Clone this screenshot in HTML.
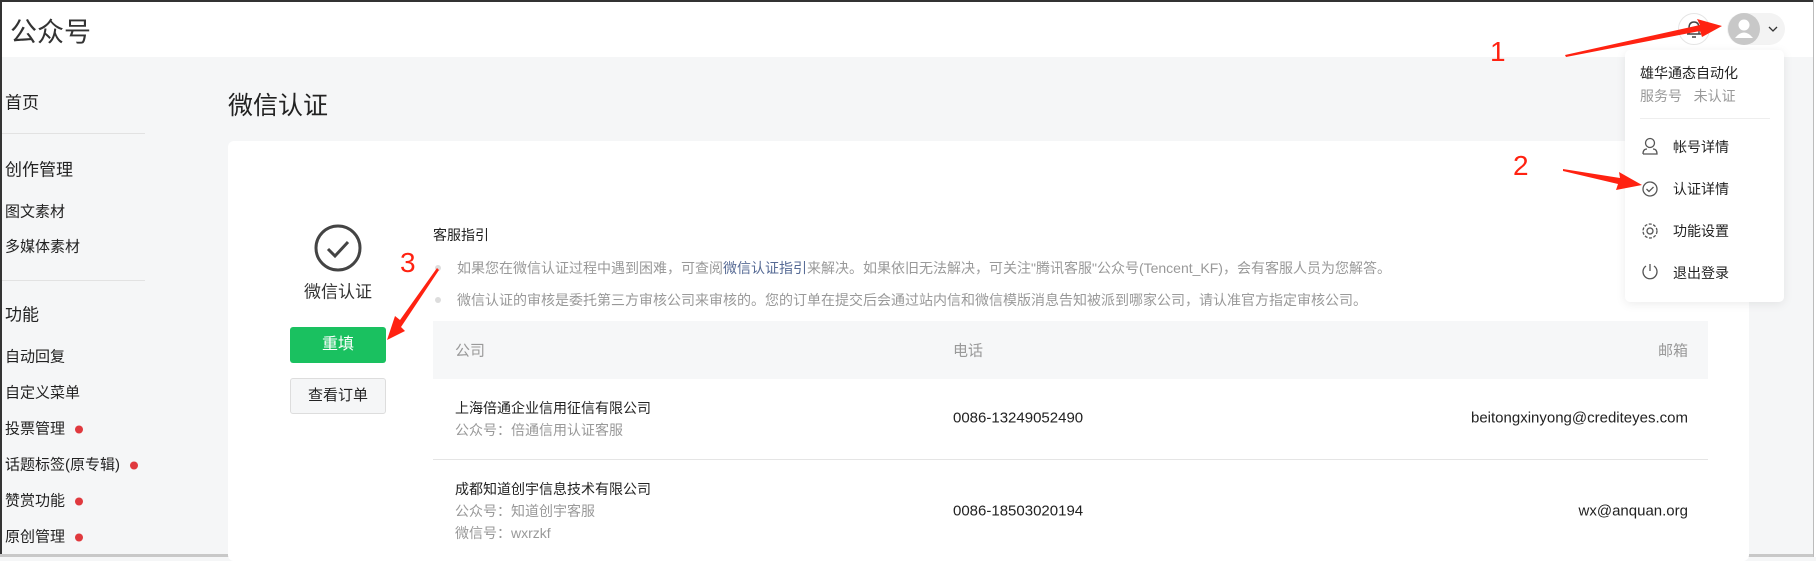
<!DOCTYPE html>
<html><head><meta charset="utf-8"><style>
*{margin:0;padding:0;box-sizing:border-box}
body{width:1816px;height:557px;overflow:hidden;background:#f5f6f7;font-family:"Liberation Sans","Noto Sans CJK SC",sans-serif;position:relative;color:#333}
.a{position:absolute;white-space:nowrap}
.top{position:absolute;left:0;top:0;width:1816px;height:57px;background:#fff;border-top:2px solid #333;border-left:2px solid #333}
.side{font-size:15px;color:#222;left:5px;transform:translateY(-50%)}
.h{font-size:17px}
.dv{position:absolute;left:2px;width:143px;height:1px;background:#e2e2e2}
.dot{display:inline-block;width:8px;height:8px;border-radius:50%;background:#e0393e;margin-left:10px;vertical-align:middle}
.card{position:absolute;left:228px;top:141px;width:1521px;height:420px;background:#fff;border-radius:6px}
.g{color:#999;font-size:14px}
.c{transform:translateY(-50%)}
.menu{position:absolute;left:1625px;top:50px;width:159px;height:252px;background:#fff;border-radius:5px;box-shadow:0 2px 10px rgba(0,0,0,.08)}
</style></head><body>
<div class="top"></div>
<div class="a c" style="left:10px;top:30px;font-size:27px;color:#333">公众号</div>
<div style="position:absolute;left:0;top:0;width:2px;height:557px;background:#333"></div>
<div style="position:absolute;left:0;bottom:0;width:1816px;height:3px;background:#c8c8c8"></div>
<div style="position:absolute;left:1813px;top:0;width:3px;height:557px;background:#fff;border-left:1px solid #bbb"></div>

<div class="a side h" style="top:101px">首页</div>
<div class="dv" style="top:133px"></div>
<div class="a side h" style="top:168px">创作管理</div>
<div class="a side" style="top:211px">图文素材</div>
<div class="a side" style="top:246px">多媒体素材</div>
<div class="dv" style="top:280px"></div>
<div class="a side h" style="top:313px">功能</div>
<div class="a side" style="top:356px">自动回复</div>
<div class="a side" style="top:392px">自定义菜单</div>
<div class="a side" style="top:428px">投票管理<span class="dot"></span></div>
<div class="a side" style="top:464px">话题标签(原专辑)<span class="dot"></span></div>
<div class="a side" style="top:500px">赞赏功能<span class="dot"></span></div>
<div class="a side" style="top:536px">原创管理<span class="dot"></span></div>

<div class="a c" style="left:228px;top:104px;font-size:25px;color:#222">微信认证</div>
<div class="card"></div>
<svg class="a" style="left:312px;top:222px" width="52" height="52"><circle cx="26" cy="26" r="22" fill="none" stroke="#444" stroke-width="3"/><path d="M16 27 L23 34 L36 20" fill="none" stroke="#444" stroke-width="3"/></svg>
<div class="a c" style="left:338px;top:290px;font-size:17px;transform:translate(-50%,-50%)">微信认证</div>
<div class="a" style="left:290px;top:327px;width:96px;height:36px;background:#1ac160;border-radius:3px;color:#fff;font-size:16px;text-align:center;line-height:36px">重填</div>
<div class="a" style="left:290px;top:378px;width:96px;height:36px;background:#f5f6f7;border:1px solid #ddd;border-radius:3px;color:#222;font-size:15px;text-align:center;line-height:34px">查看订单</div>

<div class="a c" style="left:433px;top:235px;font-size:14px;color:#222">客服指引</div>
<div class="a" style="left:435px;top:265px;width:6px;height:6px;border-radius:50%;background:#ddd"></div>
<div class="a" style="left:435px;top:297px;width:6px;height:6px;border-radius:50%;background:#ddd"></div>
<div class="a c g" style="left:457px;top:268px">如果您在微信认证过程中遇到困难，可查阅<span style="color:#576b95">微信认证指引</span>来解决。如果依旧无法解决，可关注"腾讯客服"公众号(Tencent_KF)，会有客服人员为您解答。</div>
<div class="a c g" style="left:457px;top:300px">微信认证的审核是委托第三方审核公司来审核的。您的订单在提交后会通过站内信和微信模版消息告知被派到哪家公司，请认准官方指定审核公司。</div>

<div class="a" style="left:433px;top:321px;width:1275px;height:58px;background:#f6f7f8"></div>
<div class="a c g" style="left:455px;top:350px;font-size:15px">公司</div>
<div class="a c g" style="left:953px;top:350px;font-size:15px">电话</div>
<div class="a c g" style="right:128px;top:350px;font-size:15px">邮箱</div>
<div class="a c" style="left:455px;top:408px;font-size:14px;color:#222">上海倍通企业信用征信有限公司</div>
<div class="a c g" style="left:455px;top:430px">公众号：倍通信用认证客服</div>
<div class="a c" style="left:953px;top:418px;font-size:15px;color:#222">0086-13249052490</div>
<div class="a c" style="right:128px;top:418px;font-size:15px;color:#222">beitongxinyong@crediteyes.com</div>
<div class="a" style="left:433px;top:459px;width:1275px;height:1px;background:#e5e5e5"></div>
<div class="a c" style="left:455px;top:489px;font-size:14px;color:#222">成都知道创宇信息技术有限公司</div>
<div class="a c g" style="left:455px;top:511px">公众号：知道创宇客服</div>
<div class="a c g" style="left:455px;top:533px">微信号：wxrzkf</div>
<div class="a c" style="left:953px;top:511px;font-size:15px;color:#222">0086-18503020194</div>
<div class="a c" style="right:128px;top:511px;font-size:15px;color:#222">wx@anquan.org</div>

<!-- header icons -->
<div class="a" style="left:1678px;top:13px;width:32px;height:32px;border-radius:50%;border:1px solid #e5e5e5;background:#fff"></div>
<svg class="a" style="left:1678px;top:13px" width="32" height="32" fill="none" stroke="#444" stroke-width="1.4"><path d="M11 21 L11 15 Q11 9 16 9 Q21 9 21 15 L21 21 Z M9 21 L23 21 M14 24 L18 24"/></svg>
<div class="a" style="left:1727px;top:13px;width:58px;height:32px;border-radius:16px;background:#f3f3f3"></div>
<svg class="a" style="left:1728px;top:13px" width="57" height="32"><circle cx="16" cy="16" r="16" fill="#c8c8c8"/><circle cx="16" cy="12" r="5.5" fill="#fff"/><path d="M7 25 Q16 14 25 25 Z" fill="#fff"/><path d="M41 14 L45 18 L49 14" fill="none" stroke="#333" stroke-width="1.3"/></svg>

<div class="menu"></div>
<div class="a c" style="left:1640px;top:73px;font-size:14px;color:#222">雄华通态自动化</div>
<div class="a c" style="left:1640px;top:96px;font-size:14px;color:#999">服务号&nbsp;&nbsp;&nbsp;未认证</div>
<div class="a" style="left:1640px;top:118px;width:130px;height:1px;background:#eee"></div>
<svg class="a" style="left:1641px;top:137px" width="20" height="150" fill="none" stroke="#555" stroke-width="1.3">
<circle cx="9" cy="6" r="4.5"/><path d="M2 17 Q2 12 6 12 M12 12 Q16 12 16 17 L2 17"/>
<circle cx="9" cy="52" r="7"/><path d="M5.5 52 L8 54.5 L12.5 50"/>
<circle cx="9" cy="94" r="3"/><circle cx="9" cy="94" r="7" stroke-dasharray="3 1.5"/>
<path d="M9 127 L9 134 M5 129 A7 7 0 1 0 13 129"/>
</svg>
<div class="a c" style="left:1673px;top:147px;font-size:14px;color:#222">帐号详情</div>
<div class="a c" style="left:1673px;top:189px;font-size:14px;color:#222">认证详情</div>
<div class="a c" style="left:1673px;top:231px;font-size:14px;color:#222">功能设置</div>
<div class="a c" style="left:1673px;top:273px;font-size:14px;color:#222">退出登录</div>

<!-- annotations -->
<div class="a c" style="left:1490px;top:52px;font-size:28px;color:#f21">1</div>
<div class="a c" style="left:1513px;top:166px;font-size:28px;color:#f21">2</div>
<div class="a c" style="left:400px;top:263px;font-size:28px;color:#f21">3</div>
<svg class="a" style="left:0;top:0" width="1816" height="557">
<polygon points="1565,55 1700,25 1697,19 1722,26 1702,37 1700,31 1566,57" fill="#f21"/>
<polygon points="1563,169 1620,178 1619,172 1642,185 1616,190 1618,184 1563,171" fill="#f21"/>
<polygon points="437,268 400,320 395,316 387,340 405,331 401,327 439,270" fill="#f21"/>
</svg>
</body></html>
